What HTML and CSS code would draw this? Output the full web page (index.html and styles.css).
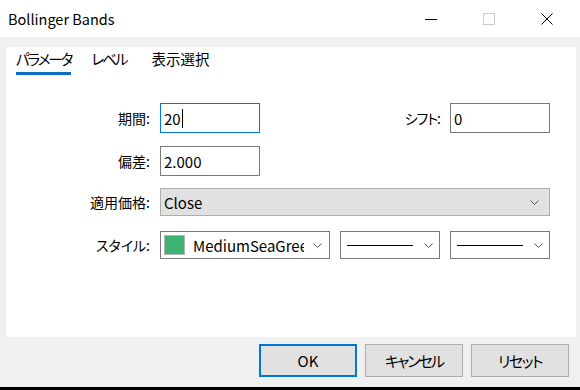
FILE: index.html
```html
<!DOCTYPE html>
<html lang="ja">
<head>
<meta charset="utf-8">
<link rel="stylesheet" href="styles.css">
</head>
<body>
<div class="window">
  <div class="titlebar">
    <span class="title">Bollinger Bands</span>
    <div class="controls">
      <span class="ctl"><svg width="12" height="12" viewBox="0 0 12 12"><line x1="0" y1="6.5" x2="12" y2="6.5" stroke="#000" stroke-width="1"/></svg></span>
      <span class="ctl"><svg width="12" height="12" viewBox="0 0 12 12"><rect x="0.5" y="0.5" width="11" height="11" fill="none" stroke="#cccccc" stroke-width="1"/></svg></span>
      <span class="ctl"><svg width="12" height="12" viewBox="0 0 12 12"><path d="M0.5 0.5 L11.5 11.5 M11.5 0.5 L0.5 11.5" stroke="#000" stroke-width="1"/></svg></span>
    </div>
  </div>
  <div class="client">
    <div class="panel">
      <div class="tabs">
        <span class="tab active kana first">パラメータ</span>
        <span class="tab kana">レベル</span>
        <span class="tab">表示選択</span>
      </div>
      <div class="form">
        <div class="row r1">
          <label class="lbl">期間:</label>
          <div class="input focus">20<span class="caret"></span></div>
          <label class="lbl lbl2 kana1">シフト:</label>
          <div class="input">0</div>
        </div>
        <div class="row r2">
          <label class="lbl">偏差:</label>
          <div class="input">2.000</div>
        </div>
        <div class="row r3">
          <label class="lbl">適用価格:</label>
          <div class="select wide"><span class="val">Close</span><svg class="chev" width="9" height="5" viewBox="0 0 9 5"><polyline points="0.5,0.5 4.5,4.5 8.5,0.5" fill="none" stroke="#555" stroke-width="1"/></svg></div>
        </div>
        <div class="row r4">
          <label class="lbl">スタイル:</label>
          <div class="combo color"><span class="swatch"></span><span class="cname">MediumSeaGreen</span><svg class="chev" width="9" height="5" viewBox="0 0 9 5"><polyline points="0.5,0.5 4.5,4.5 8.5,0.5" fill="none" stroke="#555" stroke-width="1"/></svg></div>
          <div class="combo line"><span class="stroke"></span><svg class="chev" width="9" height="5" viewBox="0 0 9 5"><polyline points="0.5,0.5 4.5,4.5 8.5,0.5" fill="none" stroke="#555" stroke-width="1"/></svg></div>
          <div class="combo line"><span class="stroke"></span><svg class="chev" width="9" height="5" viewBox="0 0 9 5"><polyline points="0.5,0.5 4.5,4.5 8.5,0.5" fill="none" stroke="#555" stroke-width="1"/></svg></div>
        </div>
      </div>
    </div>
    <div class="footer">
      <button class="btn default">OK</button>
      <button class="btn kana">キャンセル</button>
      <button class="btn kana15">リセット</button>
    </div>
  </div>
  <div class="taskbar"></div>
</div>
</body>
</html>
```
FILE: styles.css
```css
* { box-sizing: border-box; }
html, body { margin: 0; padding: 0; }
body {
  width: 580px;
  height: 390px;
  overflow: hidden;
  background: #f0f0f0;
  font-family: "Noto Sans CJK JP", "Noto Sans", sans-serif;
  font-feature-settings: "palt";
  font-size: 14px;
  color: #000;
}
.window { display: flex; flex-direction: column; height: 390px; }
.titlebar {
  height: 37px;
  background: #fff;
  display: flex;
  align-items: center;
  justify-content: space-between;
}
.title { padding-left: 8px; font-size: 14.5px; margin-top: -1px; }
.controls { display: flex; align-items: center; }
.ctl { width: 46px; height: 24px; display: flex; align-items: center; justify-content: center; margin-left: 12px; }
.ctl:first-child { margin-left: 0; }
.ctl:last-child { margin-right: 10px; }
.client { flex: 1; display: flex; flex-direction: column; padding: 10px 4px 0 6px; }
.panel { height: 290px; background: #fff; }
.tabs { display: flex; padding-left: 10px; }
.tab {
  height: 28px;
  padding-top: 2px;
  line-height: 20px;
  font-size: 14.5px;
  margin-right: 22px;
  border-bottom: 3px solid transparent;
}
.tab.active { border-bottom-color: #0a6fc2; }
.kana { letter-spacing: -2px; }
.kana15 { letter-spacing: -1.5px; }
.kana1 { letter-spacing: -1px; }
.tab.kana { margin-right: 25px; }
.tab.kana.first { margin-right: 20px; }
.form { padding-top: 28px; }
.row { display: flex; align-items: center; }
.r2 { margin-top: 13px; }
.r3 { margin-top: 12px; }
.r4 { margin-top: 15px; }
.lbl { text-align: right; padding-right: 10px; width: 154px; font-size: 14px; }
.lbl2 { width: 190px; }
.input {
  width: 100px;
  height: 30px;
  border: 1px solid #7a7a7a;
  padding-left: 3px;
  display: flex;
  align-items: center;
  font-size: 15px;
}
.input.focus { border-color: #0078d7; }
.caret { display: inline-block; width: 1px; height: 19px; background: #000; margin-left: 1px; }
.select {
  height: 28px;
  border: 1px solid #adadad;
  background: #e1e1e1;
  display: flex;
  align-items: center;
  justify-content: space-between;
  padding: 0 10px 0 3px;
  font-size: 15px;
}
.wide { width: 390px; }
.combo {
  height: 28px;
  border: 1px solid #7a7a7a;
  background: #fff;
  display: flex;
  align-items: center;
  font-size: 15px;
}
.color { width: 170px; padding-left: 3px; }
.swatch { width: 21px; height: 20px; background: #3cb371; border: 1px solid #b5b5b5; flex: none; }
.cname { margin-left: 8px; width: 111px; overflow: hidden; white-space: nowrap; }
.color .chev { margin-left: 9px; }
.line { width: 100px; margin-left: 10px; padding-left: 6px; }
.stroke { width: 66px; height: 1px; background: #000; flex: none; }
.line .chev { margin-left: 11px; }
.footer { display: flex; justify-content: flex-end; padding: 7px 7px 0 0; gap: 8px; }
.btn {
  width: 98px;
  height: 33px;
  background: #e1e1e1;
  border: 1px solid #adadad;
  font-family: "Noto Sans CJK JP", "Noto Sans", sans-serif;
  font-feature-settings: "palt";
  font-size: 15px;
  color: #000;
  padding: 0;
}
.btn.default { border: 2px solid #0078d7; }
.taskbar { height: 3px; background: #000; }
```
